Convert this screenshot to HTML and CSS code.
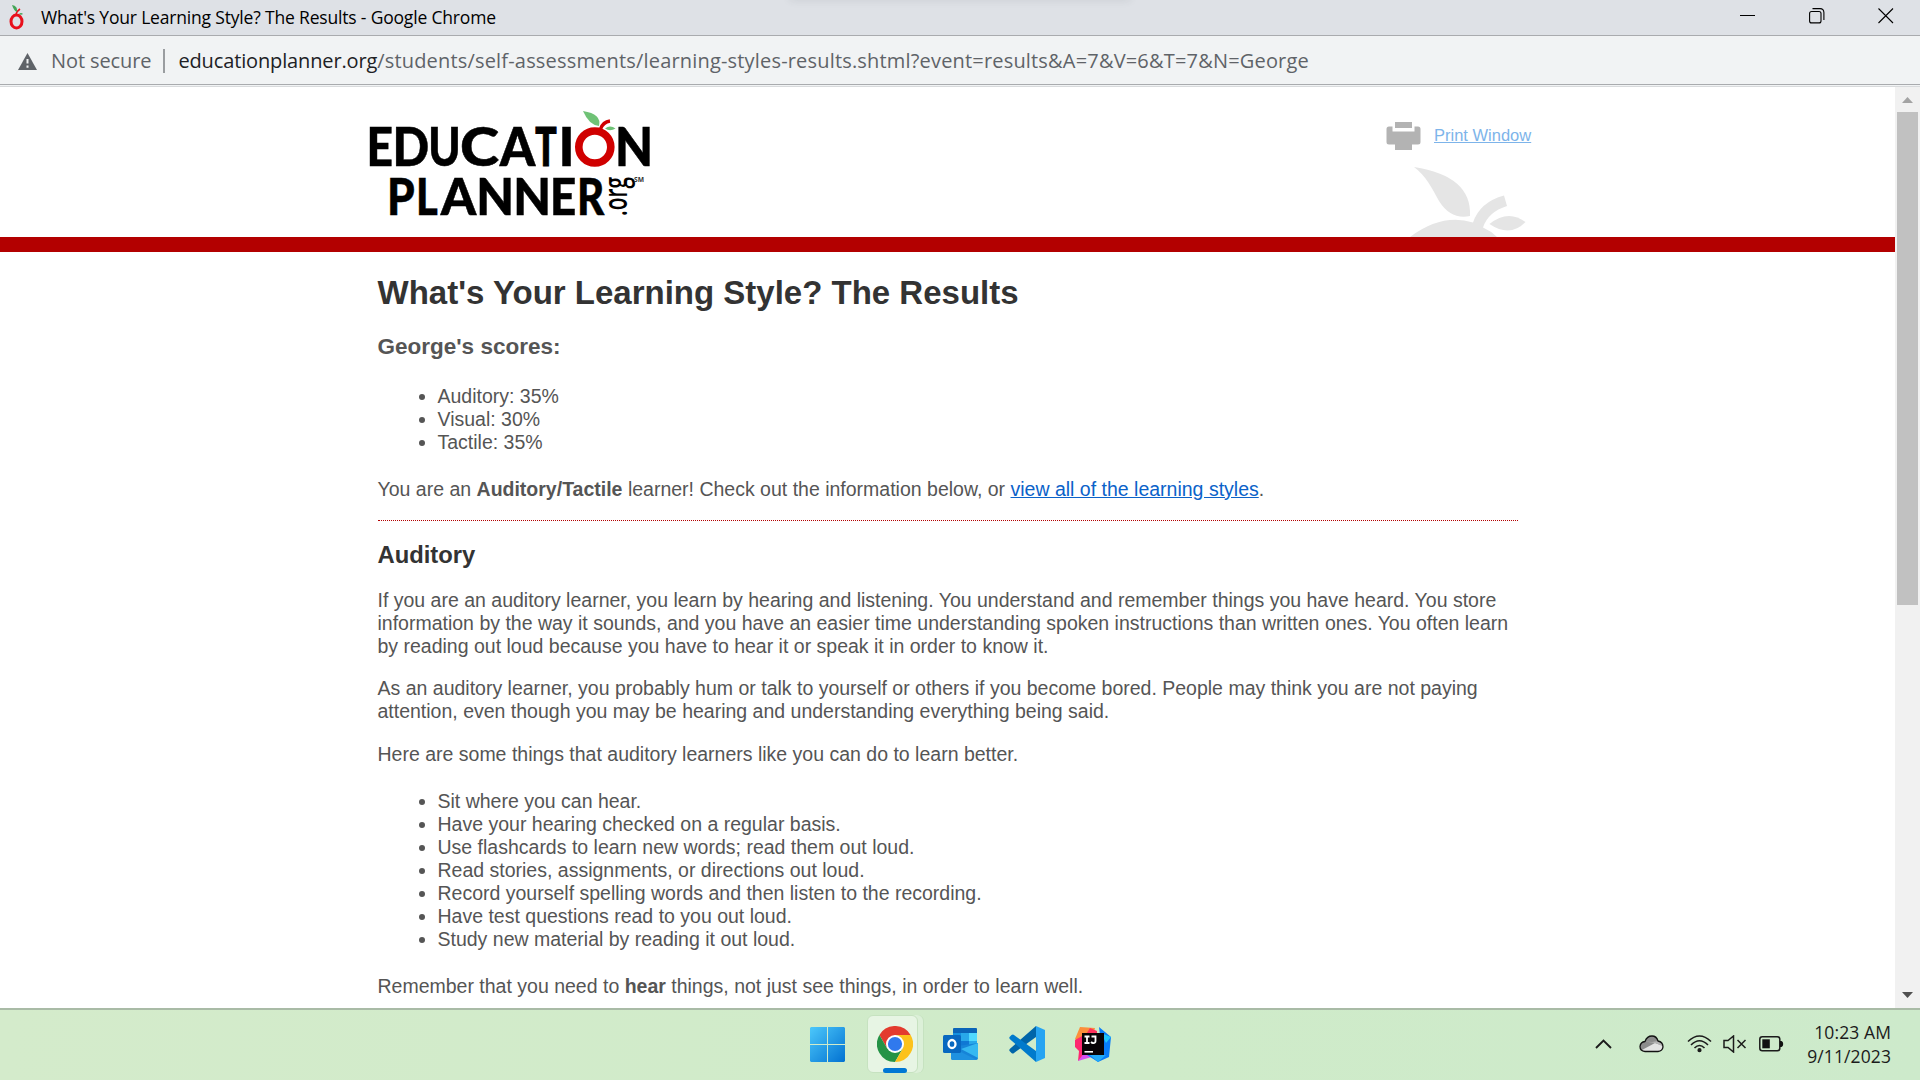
FILE: index.html
```html
<!DOCTYPE html>
<html lang="en">
<head>
<meta charset="utf-8">
<title>What's Your Learning Style? The Results</title>
<link rel="stylesheet" href="styles.css">
</head>
<body>
<header class="titlebar">
  <svg class="favicon" width="18" height="26" viewBox="0 0 18 26"><ellipse cx="8.500" cy="17.500" rx="5.500" ry="6.500" fill="none" stroke="#e8101c" stroke-width="3"/><path d="M8 10 Q9 7 12 5" fill="none" stroke="#e8101c" stroke-width="1.600"/><path d="M4 1 Q10 2 9 8 Q6 7 4 1Z" fill="#43a557"/><path d="M11 10 Q13 8 15 10 Q13 11.500 11 10Z" fill="#43a557"/></svg>
  <span class="title">What's Your Learning Style? The Results - Google Chrome</span>
  <div class="winbuttons">
    <svg width="16" height="16" viewBox="0 0 16 16"><path d="M0 7.500H15" stroke="#000" stroke-width="1"/></svg>
    <svg width="16" height="16" viewBox="0 0 16 16" fill="none" stroke="#000" stroke-width="1.100"><rect x=".6" y="3.500" width="11.400" height="11.400" rx="2"/><path d="M3.500 .6H11Q14.900 .6 14.900 4.500V12"/></svg>
    <svg width="16" height="16" viewBox="0 0 16 16"><path d="M.5 .5L15 15M15 .5L.5 15" stroke="#000" stroke-width="1.100"/></svg>
  </div>
  <div class="tabshade"></div>
</header>
<div class="addressbar">
  <svg class="warn" width="20" height="17" viewBox="0 0 20 17"><path d="M9.500 0L19 17H0Z" fill="#5f6368"/><path d="M9.500 6V10.500M9.500 12.500V14.700" stroke="#f1f3f4" stroke-width="2"/></svg>
  <span class="notsecure">Not secure</span>
  <span class="divider"></span>
  <span class="url"><b>educationplanner.org</b>/students/self-assessments/learning-styles-results.shtml?event=results&amp;A=7&amp;V=6&amp;T=7&amp;N=George</span>
</div>
<div class="viewport">
  <div class="page">
    <div class="masthead">
      <svg class="logo" width="290" height="110" viewBox="365 107 290 110">
        <text class="l1" y="165.500"><tspan x="366.500" textLength="26.500" lengthAdjust="spacingAndGlyphs">E</tspan><tspan x="392.400" textLength="36.700" lengthAdjust="spacingAndGlyphs">D</tspan><tspan x="428.300" textLength="32.400" lengthAdjust="spacingAndGlyphs">U</tspan><tspan x="460" textLength="39.100" lengthAdjust="spacingAndGlyphs">C</tspan><tspan x="499.700" textLength="35.600" lengthAdjust="spacingAndGlyphs">A</tspan><tspan class="t" x="535.200" textLength="21.400" lengthAdjust="spacingAndGlyphs">T</tspan><tspan x="558.600" textLength="16.100" lengthAdjust="spacingAndGlyphs">I</tspan><tspan x="615" textLength="38.100" lengthAdjust="spacingAndGlyphs">N</tspan></text>
        <text class="l2" y="214.500"><tspan x="387" textLength="27.700" lengthAdjust="spacingAndGlyphs">P</tspan><tspan x="415.900" textLength="21.800" lengthAdjust="spacingAndGlyphs">L</tspan><tspan x="440.700" textLength="35.500" lengthAdjust="spacingAndGlyphs">A</tspan><tspan x="476.300" textLength="37.800" lengthAdjust="spacingAndGlyphs">N</tspan><tspan x="513.300" textLength="37.800" lengthAdjust="spacingAndGlyphs">N</tspan><tspan x="549.900" textLength="26.200" lengthAdjust="spacingAndGlyphs">E</tspan><tspan x="577.100" textLength="27.300" lengthAdjust="spacingAndGlyphs">R</tspan></text>
        <text class="org" transform="translate(627 216) rotate(-90)" textLength="39" lengthAdjust="spacingAndGlyphs">.org</text>
        <text class="sm" x="634" y="182" textLength="10" lengthAdjust="spacingAndGlyphs">SM</text>
        <circle cx="594.800" cy="147" r="16" fill="none" stroke="#d00000" stroke-width="7.600"/>
        <path d="M600.500 129Q603 122 610 121" fill="none" stroke="#d00000" stroke-width="3.400"/>
        <path d="M583 111Q602 114 599 126Q589 125 583 111Z" fill="#6fc276"/>
        <path d="M605 128.500Q610 124.500 615.500 128.500Q610 132 605 128.500Z" fill="#6fc276"/>
      </svg>
      <div class="tools">
        <a class="print"><svg width="36" height="30" viewBox="0 0 36 30" fill="#b3b3b3"><path d="M9 1H26V7H9Z"/><path d="M3 5.500H6.500V10.500H28.500V5.500H32Q34.500 5.500 34.500 8V21Q34.500 23.500 32 23.500H26V29H9V23.500H3Q.5 23.500 .5 21V8Q.5 5.500 3 5.500Z"/></svg><span>Print Window</span></a>
        <svg class="apple" width="118" height="71" viewBox="50 66 118 71" fill="#e5e5e5"><path d="M54 67Q112 76 110 116Q91 120 79 101C72 88 66 76 54 67Z"/><path d="M50 137Q82 113 113 122.500Q120 102 144 95.500L147 106Q128 112 123 127.500Q131 131 137 137Z"/><path d="M129.500 124Q148 109 165.500 122Q150 138 129.500 124Z"/></svg>
      </div>
    </div>
    <div class="redbar"></div>
    <main class="content">
      <h1>What's Your Learning Style? The Results</h1>
      <h2 class="scores">George's scores:</h2>
      <ul>
        <li>Auditory: 35%</li>
        <li>Visual: 30%</li>
        <li>Tactile: 35%</li>
      </ul>
      <p class="summary">You are an <b>Auditory/Tactile</b> learner! Check out the information below, or <a class="link">view all of the learning styles</a>.</p>
      <h2 class="style">Auditory</h2>
      <p class="intro">If you are an auditory learner, you learn by hearing and listening. You understand and remember things you have heard. You store<br>information by the way it sounds, and you have an easier time understanding spoken instructions than written ones. You often learn<br>by reading out loud because you have to hear it or speak it in order to know it.</p>
      <p>As an auditory learner, you probably hum or talk to yourself or others if you become bored. People may think you are not paying<br>attention, even though you may be hearing and understanding everything being said.</p>
      <p>Here are some things that auditory learners like you can do to learn better.</p>
      <ul>
        <li>Sit where you can hear.</li>
        <li>Have your hearing checked on a regular basis.</li>
        <li>Use flashcards to learn new words; read them out loud.</li>
        <li>Read stories, assignments, or directions out loud.</li>
        <li>Record yourself spelling words and then listen to the recording.</li>
        <li>Have test questions read to you out loud.</li>
        <li>Study new material by reading it out loud.</li>
      </ul>
      <p>Remember that you need to <b>hear</b> things, not just see things, in order to learn well.</p>
    </main>
  </div>
  <div class="scrollbar">
    <svg width="11" height="6" viewBox="0 0 11 6"><path d="M5.500 0L11 6H0Z" fill="#a3a3a3"/></svg>
    <div class="thumb"></div>
    <svg class="down" width="11" height="6" viewBox="0 0 11 6"><path d="M5.500 6L11 0H0Z" fill="#505050"/></svg>
  </div>
</div>
<footer class="taskbar">
  <div class="apps">
    <svg class="start" width="36" height="36" viewBox="0 0 36 36"><defs><linearGradient id="win" x1="0" y1="0" x2="36" y2="36" gradientUnits="userSpaceOnUse"><stop offset="0" stop-color="#4cc8fb"/><stop offset="1" stop-color="#006fd0"/></linearGradient></defs><path fill="url(#win)" d="M1 0H17V17H0V1ZM18 0H34L35 1V17H18ZM0 18H17V35H1L0 34ZM18 18H35V34L34 35H18Z"/></svg>
    <div class="activeapp">
      <svg width="36" height="36" viewBox="0 0 36 36"><path d="M18 9H33.600A18 18 0 0 0 2.400 9L10.200 22.500Z" fill="#e33b2e"/><path d="M2.400 9A18 18 0 0 0 18 36L25.800 22.500L10.200 22.500Z" fill="#249346"/><path d="M18 9H33.600A18 18 0 0 1 18 36L25.800 22.500Z" fill="#fcc21b"/><circle cx="18" cy="18" r="9" fill="#fff"/><circle cx="18" cy="18" r="7.100" fill="#3079ed"/></svg>
      <span class="indicator"></span>
    </div>
    <svg class="outlook" width="36" height="34" viewBox="0 0 36 34"><rect x="10" y="0" width="24" height="22" rx="1" fill="#0a64b8"/><path d="M10 5H18V13H10Z" fill="#1490df"/><path d="M18 5H26V13H18Z" fill="#28a8ea"/><path d="M26 5H34V13H26Z" fill="#50d9ff"/><path d="M18 13H26V21H18Z" fill="#0f78d4"/><path d="M26 13H34V19H26Z" fill="#28a8ea"/><path d="M8 19L35 15V30Q35 32 33 32H10Q8 32 8 30Z" fill="#1684d8"/><path d="M35 15V30L18 21Z" fill="#35b8f1"/><path d="M8 19L34 32H10Q8 32 8 30Z" fill="#1e91e0"/><rect y="7" width="18" height="18" rx="1.500" fill="#0868c0"/><ellipse cx="9" cy="16" rx="3.500" ry="4" fill="none" stroke="#fff" stroke-width="2.300"/></svg>
    <svg class="code" width="36" height="36" viewBox="0 0 36 36"><path d="M27 0L36 4V32L27 36Z" fill="#26a4f2"/><path d="M27 0V11L5 27Q4 28 2.500 27L.8 25.300Q-.3 24 1 22.800Z" fill="#0065a9"/><path d="M27 36V25L5 9Q4 8 2.500 9L.8 10.700Q-.3 12 1 13.200Z" fill="#007acc"/></svg>
    <svg width="36" height="36" viewBox="0 0 36 36"><path d="M5 1L20 2L15 20L5 18L0 13Z" fill="#fc8f3b"/><path d="M0 14L9 9L12 28L3 35L4 25L0 21Z" fill="#fe2870"/><path d="M3 35L10 26L20 30Z" fill="#d74ef0"/><path d="M15 2L22 5V10H10Z" fill="#fe315d"/><path d="M24 1L36 11L34 31L23 36L12 29L26 18Z" fill="#087cfa"/><path d="M26 7L36 11L31 17Z" fill="#20c5fb"/><path d="M15 29H31L23 36Z" fill="#22aaf8"/><rect x="7" y="7" width="22" height="22" fill="#080407"/><path d="M9.500 10.500H14.500M12 10.500V17M9.500 17H14.500M16.500 10.500H20.500V15Q20.500 17.300 18 17Q17 17 16 16" stroke="#fff" stroke-width="1.800" fill="none"/><path d="M9.500 25.800H18" stroke="#fff" stroke-width="1.600"/></svg>
  </div>
  <div class="tray">
    <svg class="chev" width="17" height="10" viewBox="0 0 17 10"><path d="M1 9L8.500 1.500L16 9" fill="none" stroke="#1b1b1b" stroke-width="1.900"/></svg>
    <svg class="cloud" width="25" height="18" viewBox="0 0 25 18"><path d="M6 16.500Q1 16 1 11.500Q1.500 7 6 6.500Q8 1 13 1Q17.500 1 19 6Q24 7 24 12Q23.500 16 19 16.500Z" fill="#8c8c8c"/><path d="M3 15L16 8L24 11Q24 16 19 16.500H6Z" fill="#e4e4e4"/><path d="M6 6.500L16 8L24 11Q23 7 19 6L13 7Z" fill="#b5b5b5"/><path d="M6 16.500Q1 16 1 11.500Q1.500 7 6 6.500Q8 1 13 1Q17.500 1 19 6Q24 7 24 12Q23.500 16 19 16.500Z" fill="none" stroke="#111" stroke-width="1.300"/></svg>
    <svg class="wifi" width="25" height="18" viewBox="0 0 25 18" fill="none" stroke="#1b1b1b" stroke-width="1.600"><path d="M1 6.500Q12.500 -4.500 24 6.500M4 10Q12.500 1.500 21 10M7.500 13Q12.500 8 17.500 13"/><circle cx="12.500" cy="15.200" r="1.300" fill="#1b1b1b"/></svg>
    <svg class="mute" width="24" height="18" viewBox="0 0 24 18" fill="none" stroke="#1b1b1b" stroke-width="1.500"><path d="M1 5.500H5L10.500 1V17L5 12.500H1ZM14.500 5L22.500 13M22.500 5L14.500 13"/></svg>
    <svg class="battery" width="25" height="16" viewBox="0 0 25 16"><rect x=".8" y=".8" width="20" height="14" rx="2.500" fill="none" stroke="#1b1b1b" stroke-width="1.500"/><rect x="3.300" y="3.300" width="7.500" height="9" fill="#111"/><path d="M21 5H22.500Q24.200 5.500 24.200 8Q24.200 10.500 22.500 11H21Z" fill="#111"/></svg>
    <div class="clock"><span>10:23 AM</span><span>9/11/2023</span></div>
  </div>
</footer>
</body>
</html>
```
FILE: styles.css
```css
* { box-sizing: border-box; }
body { margin: 0; width: 1920px; height: 1080px; overflow: hidden; display: flex; flex-direction: column; background: #fff; font-family: "Liberation Sans", Arial, sans-serif; }
svg { display: block; flex: none; }

.titlebar { position: relative; height: 36px; flex: none; display: flex; align-items: center; padding-left: 8px; background: #dee1e6; border-bottom: 1px solid #a9abae; }
.favicon { margin: -2px 15px 0 0; }
.title { margin-top: -1px; font: 17.5px/24px "Open Sans", sans-serif; letter-spacing: -.18px; color: #000; white-space: nowrap; }
.winbuttons { margin-left: auto; margin-right: 26px; margin-top: -4px; display: flex; gap: 53px; }
.tabshade { position: absolute; left: 790px; top: -8px; width: 340px; height: 8px; box-shadow: 0 0 8px rgba(60,64,70,.12); }

.addressbar { height: 51px; flex: none; display: flex; align-items: center; padding: 0 0 1px 18px; background: linear-gradient(#f1f3f4 48px, #a9abae 48px 49px, #f1f3f4 49px 50px, #d8dadc 50px); font: 20px/26px "Open Sans", sans-serif; color: #5f6368; white-space: nowrap; }
.warn { margin: 0 13px 0 0; }
.notsecure { letter-spacing: -.1px; }
.divider { width: 2px; height: 24px; background: #9a9da0; margin: 0 13px 0 12px; }
.url { letter-spacing: .18px; }
.url b { font-weight: 400; color: #202124; letter-spacing: -.14px; }

.viewport { height: 921px; flex: none; display: flex; }
.page { width: 1895px; overflow: hidden; }
.masthead { height: 150px; padding: 20px 0 0 365px; display: flex; }
.logo { font-family: Lato, sans-serif; }
.l1, .l2 { font-weight: 900; stroke: #000; stroke-width: .5px; }
.l1 { font-size: 53px; }
.l2 { font-size: 51.5px; }
.t { stroke-width: 1.2px; }
.org { font: 600 32px "Open Sans", sans-serif; }
.sm { font: 700 7px "Open Sans", sans-serif; fill: #333; }
.tools { margin-left: 731px; padding-top: 13px; display: flex; flex-direction: column; }
.print { display: flex; gap: 12px; color: #7db4ea; font-size: 16.5px; line-height: 30px; text-decoration: underline; }
.print svg { margin-top: .5px; }
.apple { margin: 15.5px 0 0 24px; }
.redbar { height: 15px; background: #b30000; }

.content { width: 1140px; margin-left: 377.5px; padding-top: 21px; color: #555; font-size: 19.5px; line-height: 23px; white-space: nowrap; }
h1, h2 { margin: 0; }
h1 { font-size: 33px; line-height: 40px; color: #333; }
h2 { font-size: 22.5px; line-height: 28px; }
.scores { margin: 20px 0 24px; }
.content p { margin: 0 0 20px; }
.content .intro { margin-bottom: 19px; }
.content ul { margin: 24px 0; padding-left: 60px; }
.content .summary { height: 43px; margin: 0; border-bottom: 1px dotted #b30000; }
.style { margin: 20px 0; color: #333; font-size: 23.8px; }
.link { color: #0b62c9; text-decoration: underline; }

.scrollbar { width: 25px; background: #f1f1f1; display: flex; flex-direction: column; align-items: center; padding: 10px 0; }
.thumb { width: 21px; height: 493px; margin-top: 9px; background: #c1c1c1; }
.down { margin-top: auto; }

.taskbar { height: 72px; flex: none; display: flex; border-top: 2px solid #a9bba6; background: linear-gradient(90deg, #d4ebcb, #cfebc9 60%, #cdeacb); }
.apps { margin-left: 810px; display: flex; align-items: flex-start; padding-top: 16px; }
.start { margin-top: 1px; }
.activeapp { width: 51px; height: 58px; margin: -11px 25px 0 21px; padding: 10px 0 0 9px; border: 1px solid #c6e2c0; border-radius: 6px; background: #e7f5e4; box-shadow: 5px 0 0 #dcf0d8, 6px 0 0 #c6e2c0; }
.indicator { display: block; width: 24px; height: 5px; margin: 6px 0 0 6px; border-radius: 3px; background: #0078d4; }
.outlook { margin-top: 2px; }
.code { margin: 0 30px; }
.tray { margin-left: auto; display: flex; align-items: center; padding-right: 29px; }
.tray svg { margin-top: -2px; }
.tray .cloud { margin: -2px 23px 0 27px; }
.tray .mute { margin: -2px 12px 0 11px; }
.clock { align-self: flex-start; width: 107px; display: flex; flex-direction: column; align-items: flex-end; font: 17.5px/24px "Open Sans", sans-serif; letter-spacing: .1px; color: #1b1b1b; padding-top: 10px; }
```
